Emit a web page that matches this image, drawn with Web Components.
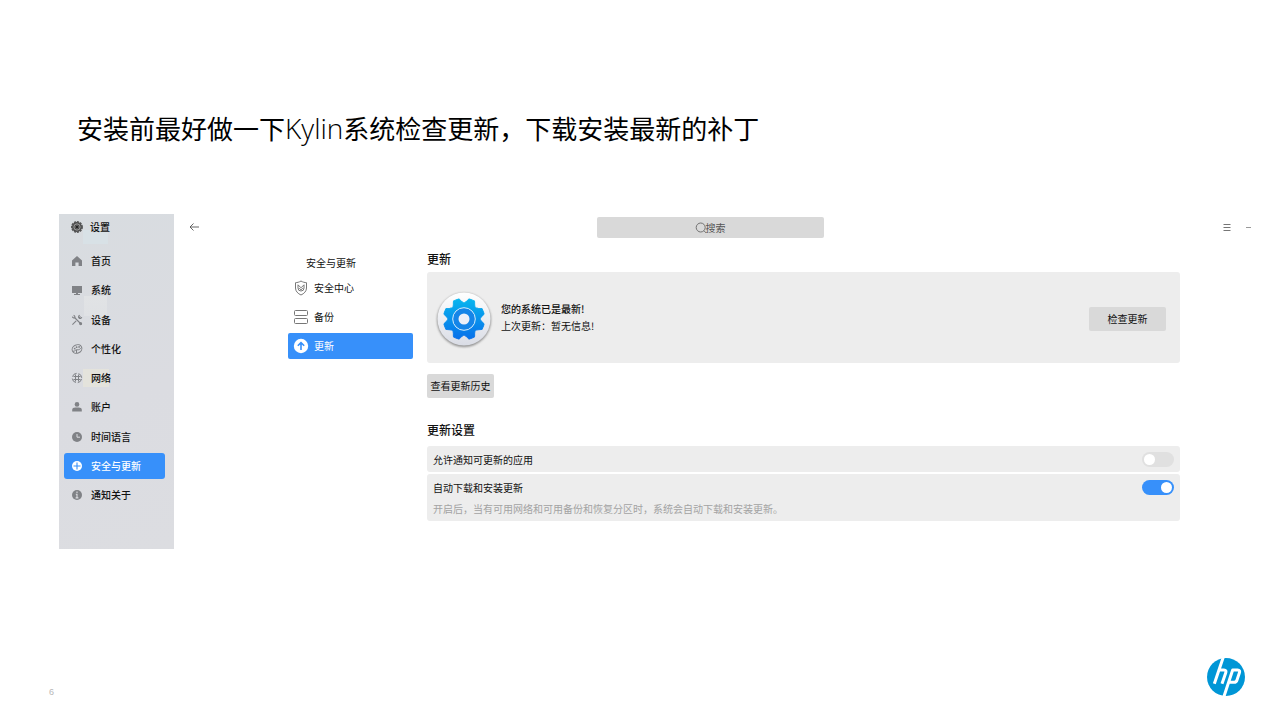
<!DOCTYPE html>
<html lang="zh-CN">
<head>
<meta charset="utf-8">
<title>Kylin 系统更新</title>
<style>
  html, body { margin: 0; background: #fff; }
  body { font-family: "Liberation Sans", "Noto Sans CJK SC", sans-serif; color: #111; }
</style>
</head>
<body>
<slide-page number="6">
  <span slot="title">安装前最好做一下<span style="font:300 28px/36px 'Open Sans',sans-serif">Kylin</span>系统检查更新，下载安装最新的补丁</span>
  <settings-window></settings-window>
</slide-page>

<script>
const FONT = '"Noto Sans CJK SC", sans-serif';

/* Icons are drawn on a 12 x 12 grid unless a viewBox is given. */
const ICONS = {
  settings: ['0 0 12 12', '<circle cx="6" cy="6" r="4.2" fill="#444" stroke="#555" stroke-width="1.8" stroke-dasharray="1.7 .7"/><circle cx="6" cy="6" r="2.7" fill="none" stroke="#aaa" stroke-width=".8"/><circle cx="6" cy="6" r="1.4" fill="#222" stroke="#888" stroke-width=".4"/>'],
  home: ['0 0 12 12', '<path fill="currentColor" d="M6 1 1 5.4V11h3.4V7.4h3.2V11H11V5.4z"/>'],
  system: ['0 0 12 12', '<path fill="currentColor" d="M1 2h10v7H7v1h2v1H3v-1h2V9H1z"/>'],
  device: ['0 0 12 12', '<g fill="none" stroke="currentColor" stroke-width="1.1"><path d="m3.500 3.500 7 7M8 4l1.500-1.500M5.200 6.800 1.400 10.600"/><path d="M1.400 2.600a1.700 1.700 0 0 0 2.300 1.200M2.600 1.400a1.700 1.700 0 0 1 1.200 2.300M8.800 1.200a1.700 1.700 0 0 0-.8 2.800 1.700 1.700 0 0 0 2.800-.8"/><circle cx="9.600" cy="9.600" r="1"/></g>'],
  personal: ['0 0 12 12', '<g fill="none" stroke="currentColor"><ellipse cx="6" cy="6" rx="5" ry="4.2" transform="rotate(-25 6 6)"/><path d="M2 8.3c2 .3 2.2-1.8 4-1.5 2 .3 3-.6 4.7-2.4M5.5 7v3"/></g><g fill="currentColor"><circle cx="3.7" cy="5.6" r=".9"/><circle cx="5.6" cy="4.2" r=".9"/><circle cx="8.1" cy="3.9" r=".9"/></g>'],
  network: ['0 0 12 12', '<g fill="none" stroke="currentColor"><circle cx="6" cy="6" r="4.700" stroke-dasharray="5.400 2" stroke-dashoffset="-1"/><path stroke-width="1" d="M4.500 2.500v7M7.500 2.500v7M2.500 4.500h7M2.500 7.500h7"/></g>'],
  account: ['0 0 12 12', '<g fill="currentColor"><circle cx="6" cy="3.4" r="2.3"/><path d="M1.2 10.5V9c0-1.6 1.4-2.4 3-2.4h3.6c1.6 0 3 .8 3 2.4v1.5z"/></g>'],
  time: ['0 0 12 12', '<circle cx="6" cy="6" r="5" fill="currentColor"/><path d="M6 3v3.2h3" fill="none" stroke="#dcdde1"/>'],
  security: ['0 0 12 12', '<circle cx="6" cy="6" r="5" fill="currentColor"/><path d="M6 2.500v7M2.500 6h7" stroke="#3790fa" stroke-width="1.100"/>'],
  about: ['0 0 12 12', '<circle cx="6" cy="6" r="5" fill="currentColor"/><path d="M6 2.6v1.5M4.8 5.2H6v3.6M4.6 8.9h2.8" fill="none" stroke="#dcdde1" stroke-width="1.1"/>'],
  shield: ['0 0 16 16', '<g fill="none" stroke="currentColor" stroke-width="1"><path d="M8 1c2 1.3 3.700 1.500 5.500 1.700V8c0 3.300-2.400 5.600-5.500 7-3.100-1.400-5.500-3.700-5.500-7V2.700C4.300 2.500 6 2.300 8 1z"/><path d="M5 4.800v3.200a3 3 0 0 0 6 0V4.800L8 7.800zM6.200 8.200 8 9.800l1.800-1.600"/></g>'],
  backup: ['0 0 16 16', '<g fill="none" stroke="currentColor"><rect x="1.500" y="1.500" width="13" height="5" rx="1"/><rect x="1.500" y="9.500" width="13" height="5" rx="1"/></g>'],
  update: ['0 0 16 16', '<circle cx="8" cy="8" r="7.200" fill="currentColor"/><path d="M8 12V4.600M4.800 7.800 8 4.600l3.200 3.200" fill="none" stroke="#3790fa" stroke-width="1.600"/>'],
  back: ['0 0 12 12', '<path d="M10 6H1M4.500 2.500 1 6l3.500 3.500" fill="none" stroke="#555" stroke-width=".9"/>'],
  search: ['0 0 12 12', '<g fill="none" stroke="#666" stroke-width=".9"><circle cx="5.700" cy="5.500" r="4.500"/><path d="m9 8.800 2.200 2.200"/></g>'],
  menu: ['0 0 12 12', '<path d="M3.500 3.500h7M3.500 6.500h7M3.500 9.500h7" stroke="#666" stroke-width=".9"/>'],
  min: ['0 0 12 12', '<path d="M5 6.500h5" stroke="#999"/>']
};
const icon = (name, size) =>
  `<svg width="${size}" height="${size}" viewBox="${ICONS[name][0]}" aria-hidden="true">${ICONS[name][1]}</svg>`;

function define(name, render) {
  customElements.define(name, class extends HTMLElement {
    connectedCallback() {
      if (this.shadowRoot) return;
      const t = document.createElement('template');
      t.innerHTML = '<style>*{box-sizing:border-box}svg{display:block;flex:none}</style>' + render(this);
      this.attachShadow({ mode: 'open' }).append(t.content.cloneNode(true));
    }
  });
}

define('hp-logo', () => `
<style>:host{display:block}</style>
<svg width="38" height="38" viewBox="0 0 114 114" role="img" aria-label="HP">
  <circle cx="57" cy="57" r="57" fill="#0096d6"/>
  <g fill="none" stroke="#fff" stroke-width="9" stroke-linejoin="round">
    <path d="M49-3 22 77M36 36h15q8 0 5 9L45 77"/>
    <path d="M50 118 77 36h15q8 0 5 9l-7 21q-2 7-9 7H65"/>
  </g>
</svg>`);

define('slide-page', el => `
<style>
  :host{display:flex;flex-direction:column;min-height:100vh;box-sizing:border-box;padding-top:110px}
  h1{margin:0 0 68px;padding:0 77px;font:400 26px/36px ${FONT};color:#000}
  .body{padding-left:59px}
  footer{margin-top:auto;display:flex;align-items:flex-end;justify-content:space-between;padding:16px 25px 18px 49px}
  small{font:9px/8px "Liberation Sans",sans-serif;color:#b8b8b8}
</style>
<h1><slot name="title"></slot></h1>
<div class="body"><slot></slot></div>
<footer><small>${el.getAttribute('number')}</small><hp-logo></hp-logo></footer>`);

define('side-item', el => `
<style>
  :host{display:block;color:#808286}
  a{display:flex;align-items:center;gap:8px;height:26px;padding-left:7px;border-radius:3px;color:inherit;text-decoration:none;font:500 10px/16px ${FONT}}
  span{color:#111}
  :host([active]) a{background:#3790fa;color:#fff}
  :host([active]) span{color:#fff}
</style>
<a href="#"${el.hasAttribute('active') ? ' aria-current="page"' : ''}>${icon(el.getAttribute('icon'), 12)}<span><slot></slot></span></a>`);

define('sub-item', el => `
<style>
  :host{display:block;color:#777}
  a{display:flex;align-items:center;gap:5px;height:26px;padding-left:5px;border-radius:2px;color:inherit;text-decoration:none;font:400 10px/16px ${FONT}}
  span{color:#111}
  :host([active]) a{background:#3790fa;color:#fff}
  :host([active]) span{color:#fff}
</style>
<a href="#"${el.hasAttribute('active') ? ' aria-current="page"' : ''}>${icon(el.getAttribute('icon'), 16)}<span><slot></slot></span></a>`);

define('side-bar', () => `
<style>
  :host{display:flex;flex-direction:column;box-sizing:border-box;width:115px;min-height:335px;flex:none;padding:0 9px 41px 5px;
    background:
      linear-gradient(#d8e1e6,#d8e1e6) 24px 16px/25px 14px no-repeat,
      linear-gradient(#e1e3e5,#dfe1e4) 25px 82px/23px 20px no-repeat,
      linear-gradient(#e4e3dc,#e4e3dc) 24px 155px/26px 18px no-repeat,
      linear-gradient(160deg,#d8dce0,#dbdce1 55%,#dcdde1)}
  header{display:flex;align-items:center;gap:6px;height:26px;padding-left:6px;font:500 10px/16px ${FONT}}
  nav{flex:1;display:flex;flex-direction:column;justify-content:space-between;margin-top:8px}
</style>
<header>${icon('settings', 14)}<span>设置</span></header>
<nav aria-label="设置">
  <side-item icon="home">首页</side-item>
  <side-item icon="system">系统</side-item>
  <side-item icon="device">设备</side-item>
  <side-item icon="personal">个性化</side-item>
  <side-item icon="network">网络</side-item>
  <side-item icon="account">账户</side-item>
  <side-item icon="time">时间语言</side-item>
  <side-item icon="security" active>安全与更新</side-item>
  <side-item icon="about">通知关于</side-item>
</nav>`);

define('title-bar', () => `
<style>
  :host{display:flex;align-items:center;justify-content:space-between;height:26px;padding:0 18px 0 15px}
  button{border:0;background:none;padding:0;display:block}
  .search{position:relative;width:227px}
  .search svg{position:absolute;left:calc(50% - 16px);top:5px}
  input{display:block;width:100%;height:21px;border:0;border-radius:2px;background:#d9d9d9;padding:1px 0 0 10px;text-align:center;font:400 10px/16px ${FONT};color:#333;outline:0}
  input::placeholder{color:#555;opacity:1}
  .tools{display:flex;gap:9px;width:32px}
</style>
<button aria-label="返回">${icon('back', 12)}</button>
<label class="search">${icon('search', 12)}<input type="text" placeholder="搜索" aria-label="搜索"></label>
<div class="tools"><button aria-label="菜单">${icon('menu', 12)}</button><button aria-label="最小化">${icon('min', 12)}</button></div>`);

define('flat-button', () => `
<style>
  :host{display:block}
  button{display:block;width:100%;height:24px;border:0;border-radius:2px;background:#d9d9d9;padding:0;font:400 10px/16px ${FONT};color:#111}
</style>
<button><slot></slot></button>`);

define('setting-row', el => `
<style>
  :host{display:block;background:#ededed;border-radius:3px;padding:6px 6px 4px;font:400 10px/16px ${FONT}}
  label{display:flex;align-items:center;justify-content:space-between;height:16px}
  input{appearance:none;display:flex;align-self:flex-start;width:32px;height:15px;margin:0;padding:2px;border-radius:8px;background:#e0e0e0}
  input::before{content:"";width:11px;height:11px;border-radius:50%;background:#fff}
  input:checked{background:#3790fa;justify-content:flex-end}
  ::slotted(p){margin:5px 0 0;color:#a3a3a3}
</style>
<label><span>${el.getAttribute('label')}</span><input type="checkbox" role="switch"${el.hasAttribute('on') ? ' checked' : ''}></label>
<slot></slot>`);

/* Eight rounded teeth placed around the wheel's centre. */
const teeth = Array.from({ length: 8 }, (_, i) =>
  `<path d="M-5-19-3.600-22.300Q-3.200-23-2.400-23H2.400Q3.200-23 3.600-22.300L5-19 8-14H-8z" transform="rotate(${i * 45 + 22.5})"/>`).join('');
define('update-emblem', () => `
<style>:host{display:block}</style>
<svg width="60" height="60" viewBox="-30 -30 60 60" aria-hidden="true">
  <defs>
    <linearGradient id="disc" x2="0" y2="1"><stop stop-color="#fff"/><stop offset="1" stop-color="#d9dce5"/></linearGradient>
    <linearGradient id="gear" gradientUnits="userSpaceOnUse" x1="0" y1="-22" x2="0" y2="22"><stop stop-color="#08b5ee"/><stop offset="1" stop-color="#0870ea"/></linearGradient>
    <filter id="soft" x="-20%" y="-20%" width="140%" height="140%"><feGaussianBlur stdDeviation="1"/></filter>
    <mask id="wheel" maskUnits="userSpaceOnUse" x="-30" y="-30" width="60" height="60"><g fill="#fff" stroke="#fff" stroke-linejoin="round"><circle r="17"/>${teeth}</g></mask>
  </defs>
  <circle cy="1" r="27" fill="#777" opacity=".8" filter="url(#soft)"/>
  <circle r="26.500" fill="url(#disc)"/>
  <rect x="-30" y="-30" width="60" height="60" fill="url(#gear)" mask="url(#wheel)" transform="scale(.9)"/>
  <circle r="11.300" fill="#1585e8" stroke="#d6eefc" stroke-width="1"/>
  <circle r="5.500" fill="#edf0f8"/>
</svg>`);

define('update-panel', () => `
<style>
  :host{display:block;flex:1;min-width:0}
  h2{margin:0;font:500 12px/18px ${FONT}}
  .card{display:flex;align-items:center;margin-top:4px;min-height:91px;padding:3px 14px 0 7px;background:#ededed;border-radius:3px}
  .card p{margin:0;font:400 10px/17px ${FONT}}
  .card p b{font-weight:500}
  .text{flex:1;padding:0 7px 4px}
  .check{width:77px}
  .history{width:67px;margin:11px 0 23px}
  .rows{display:flex;flex-direction:column;gap:2px;margin-top:7px}
</style>
<h2>更新</h2>
<section class="card">
  <update-emblem></update-emblem>
  <div class="text"><p><b>您的系统已是最新!</b></p><p>上次更新：暂无信息!</p></div>
  <flat-button class="check">检查更新</flat-button>
</section>
<flat-button class="history">查看更新历史</flat-button>
<h2>更新设置</h2>
<div class="rows">
  <setting-row label="允许通知可更新的应用"></setting-row>
  <setting-row label="自动下载和安装更新" on><p>开启后，当有可用网络和可用备份和恢复分区时，系统会自动下载和安装更新。</p></setting-row>
</div>`);

define('sub-nav', () => `
<style>
  :host{display:block;width:125px;flex:none;padding-top:5px}
  h3{margin:0 0 4px 18px;font:400 10px/16px ${FONT}}
  nav{display:flex;flex-direction:column;gap:3px}
</style>
<h3>安全与更新</h3>
<nav aria-label="安全与更新">
  <sub-item icon="shield">安全中心</sub-item>
  <sub-item icon="backup">备份</sub-item>
  <sub-item icon="update" active>更新</sub-item>
</nav>`);

define('settings-window', () => `
<style>
  :host{display:flex}
  main{flex:1;min-width:0}
  .content{display:flex;gap:14px;padding:10px 90px 0 114px}
</style>
<side-bar></side-bar>
<main>
  <title-bar></title-bar>
  <div class="content"><sub-nav></sub-nav><update-panel></update-panel></div>
</main>`);
</script>
</body>
</html>
